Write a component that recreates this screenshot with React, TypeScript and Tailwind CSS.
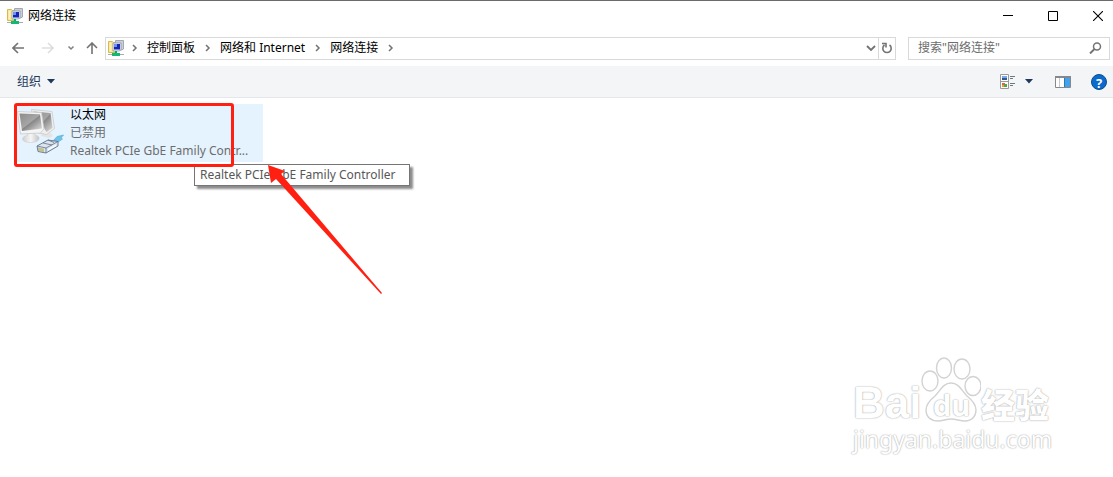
import { useState } from 'react';

const NetworkIcon = () => (
  <svg width="16" height="16" viewBox="0 0 16 16" className="shrink-0" aria-hidden="true">
    <path d="M.5 1.500h4l1 1h3v10h-8z" fill="#f7e08a" stroke="#d9b94e" />
    <path d="M1.500 2.500h2v9h-2z" fill="#fdf3bd" />
    <path d="M7.500.5h8v8.500l-2 1h-6z" fill="#c9cdd4" stroke="#a3a8b3" />
    <path d="M5 3h8v7l-2 1H5z" fill="#e9edf5" stroke="#8f97a8" strokeWidth=".8" />
    <path d="M6 4h6v5.500H6z" fill="#1626b4" />
    <path d="M6 4h3v3H6z" fill="#6d93f2" />
    <path d="M7 11h2v2h2v1H5v-1h2z" fill="#0da866" />
    <path d="M0 14h16v1H0z" fill="#a3afac" />
    <path d="M4 13h8v3H4z" fill="#12b873" />
  </svg>
);

const AdapterIcon = () => (
  <svg width="48" height="52" viewBox="0 0 48 52" className="shrink-0" aria-hidden="true">
    <defs>
      <linearGradient id="screen" x1="0" y1="0" x2="1" y2="1">
        <stop offset="0" stopColor="#8b8b8b" />
        <stop offset=".48" stopColor="#a6a6a6" />
        <stop offset=".52" stopColor="#878787" />
        <stop offset="1" stopColor="#e2e2e2" />
      </linearGradient>
      <linearGradient id="stand" x1="0" y1="0" x2="1" y2="0">
        <stop offset="0" stopColor="#cfcfcf" />
        <stop offset=".5" stopColor="#f6f6f6" />
        <stop offset="1" stopColor="#c4c4c4" />
      </linearGradient>
    </defs>
    <path d="M26 28h8l3 4-4 2-8-2z" fill="#e3e3e3" />
    <path d="M15.500 5.500l20.500 2 2.500 17-8 6-10-2z" fill="#f0f0f0" stroke="#c9c9c9" strokeWidth=".8" />
    <path d="M17.500 7.500l17 1.500 2 15-6 4z" fill="url(#screen)" />
    <path d="M11 28l7-1 1 4c3 .5 4.500 2 4 4-.5 2-4 3.500-8.500 3.500S6.500 37 6.500 35c0-2 2-3.200 5-3.500z" fill="url(#stand)" stroke="#cdcdcd" strokeWidth=".6" />
    <path d="M1.500 7.500l24 1 2.500 16.500-3.500 4L4.500 30z" fill="#f4f4f4" stroke="#c9c9c9" strokeWidth=".8" />
    <path d="M3.500 9.500l20.500.8 2 14.200-20 2.500z" fill="url(#screen)" />
    <path d="M37 37l4-4.500 6.500-1.500-2.500 3 1.500 1-6.500 4.500z" fill="#6fc3e6" stroke="#4aa9d0" strokeWidth=".6" />
    <path d="M21 42l11-6 10 1.500v4.500l-12 7-8-1.500z" fill="#dce4ec" stroke="#61728d" strokeWidth=".9" />
    <path d="M21 42l9 2 12-6.500M30 44v5M27 39l9 2M32 36l6 2.500" fill="none" stroke="#61728d" strokeWidth=".8" />
    <path d="M23 43.500v3.500M25 44v3.500M27 44.500v3.500" stroke="#a5a03e" />
    <path d="M32 45l8-4.500v1.500l-8 4.500z" fill="#fff" />
  </svg>
);

const Chevron = () => (
  <svg width="6" height="8" viewBox="0 0 6 8" className="shrink-0" aria-hidden="true">
    <path d="M1 1l3 3-3 3" fill="none" stroke="#737373" strokeWidth="1.500" />
  </svg>
);

const Triangle = () => (
  <svg width="8" height="5" viewBox="0 0 8 5" aria-hidden="true">
    <path d="M0 0h8L4 4.500z" fill="#1e395b" />
  </svg>
);

const Watermark = () => (
  <div
    className="absolute right-15 bottom-6 w-50 text-white select-none [text-shadow:0_0_1px_#aaa,0_0_2px_#bbb]"
    aria-hidden="true"
  >
    <div className="flex h-17 items-end">
      <span className="w-17 shrink-0 text-[44px] leading-[44px] font-bold font-['Liberation_Sans']">Bai</span>
      <div className="relative h-17 w-15 shrink-0">
        <svg width="60" height="68" viewBox="0 0 60 68" fill="#fff" stroke="#d2d2d2" strokeWidth="1.400">
          <ellipse cx="9" cy="24" rx="8" ry="10" />
          <ellipse cx="23" cy="11" rx="7.500" ry="10" />
          <ellipse cx="41" cy="12" rx="8" ry="10" />
          <ellipse cx="52" cy="29" rx="8" ry="9.500" />
          <path d="M30 26c-8 0-11 8-16 13-5 4-9 8-9 14 0 7 5 11 12 11 5 0 8-2 13-2s9 2 14 2c7 0 11-5 11-11s-4-10-9-14c-5-5-8-13-16-13z" />
        </svg>
        <span className="absolute bottom-1 left-3 text-[29px] leading-8 font-bold font-['Open_Sans']">du</span>
      </div>
      <span className="pb-1 text-[34px] leading-[34px] font-black whitespace-nowrap font-['Noto_Sans_CJK_SC']">经验</span>
    </div>
    <div className="text-[23px] leading-7 font-['Noto_Sans']">jingyan.baidu.com</div>
  </div>
);

const crumbs = ['控制面板', '网络和 Internet', '网络连接'];

export default function App() {
  const [query, setQuery] = useState('');

  return (
    <div className="relative flex h-screen flex-col overflow-hidden border-t border-[#6b6b6b] bg-white font-['Noto_Sans','Noto_Sans_CJK_SC',sans-serif] text-[12px] leading-[18px] text-black">
      {/* Title bar */}
      <header className="flex h-[30px] shrink-0 items-center gap-[15px] pl-[7px]">
        <div className="flex flex-1 items-center gap-[5px]">
          <NetworkIcon />
          <h1>网络连接</h1>
        </div>
        <button aria-label="最小化" className="grid h-full w-[30px] place-items-center">
          <svg width="10" height="10"><path d="M0 4.500h10" stroke="#000" /></svg>
        </button>
        <button aria-label="最大化" className="grid h-full w-[30px] place-items-center">
          <svg width="10" height="10"><path d="M.5.5h9v9h-9z" fill="none" stroke="#000" /></svg>
        </button>
        <button aria-label="关闭" className="grid h-full w-[30px] place-items-center">
          <svg width="10" height="10"><path d="M0 0l10 10M10 0L0 10" stroke="#000" strokeWidth="1.100" /></svg>
        </button>
      </header>

      {/* Address row */}
      <nav className="flex h-[35px] shrink-0 items-center pr-[3px] pb-px pl-3">
        <button aria-label="后退">
          <svg width="13" height="12" fill="none" stroke="#737373" strokeWidth="1.600"><path d="M12 6H1M6 1L1 6l5 5" /></svg>
        </button>
        <button aria-label="前进" className="ml-4">
          <svg width="13" height="12" fill="none" stroke="#dedede" strokeWidth="1.600"><path d="M1 6h11M7 1l5 5-5 5" /></svg>
        </button>
        <button aria-label="最近浏览的位置" className="ml-[13px]">
          <svg width="8" height="6" fill="none" stroke="#808080" strokeWidth="1.500"><path d="M1.500 1.500L4 4l2.500-2.500" /></svg>
        </button>
        <button aria-label="上移" className="ml-[11px]">
          <svg width="12" height="12" fill="none" stroke="#737373" strokeWidth="1.600"><path d="M6 12V1M1 6l5-5 5 5" /></svg>
        </button>
        <div className="ml-[7px] flex h-[23px] min-w-0 flex-1 items-center border border-[#d9d9d9] pl-[2px]">
          <NetworkIcon />
          <span className="ml-2 flex items-center"><Chevron /></span>
          {crumbs.map((crumb) => (
            <span key={crumb} className="flex items-center gap-[10px] pl-[9px] whitespace-nowrap">
              <a href="#">{crumb}</a>
              <Chevron />
            </span>
          ))}
          <button aria-label="以前的位置" className="ml-auto px-[2px]">
            <svg width="10" height="8" fill="none" stroke="#737373" strokeWidth="1.800"><path d="M1 2l4 4 4-4" /></svg>
          </button>
          <button aria-label="刷新" className="grid h-full w-[17px] place-items-center border-l border-[#d9d9d9]">
            <svg width="12" height="12" fill="none" stroke="#737373" strokeWidth="1.600"><path d="M3.500 3a4.200 4.200 0 1 0 5 0M1 1.500h4v4" /></svg>
          </button>
        </div>
        <label className="ml-3 flex h-[23px] w-[202px] items-center border border-[#d9d9d9] pr-[7px] pl-[9px]">
          <input
            aria-label="搜索网络连接"
            value={query}
            onChange={(e) => setQuery(e.target.value)}
            placeholder={'搜索"网络连接"'}
            className="min-w-0 flex-1 outline-none placeholder:text-[#6d6d6d]"
          />
          <svg width="13" height="12" fill="none" stroke="#737373" strokeWidth="1.500"><circle cx="8" cy="4.500" r="3.500" /><path d="M5.500 7L1 11.500" strokeWidth="1.900" /></svg>
        </label>
      </nav>

      {/* Command bar */}
      <div className="flex h-8 shrink-0 items-center border-b border-[#e5e7ea] bg-[#f4f5f7] pr-[6px] pl-[17px] text-[#1e395b]">
        <button className="flex items-center gap-[6px]">
          组织 <Triangle />
        </button>
        <button aria-label="更改视图" className="ml-auto">
          <svg width="16" height="15" fill="none">
            <path d="M.5.5h8v14h-8zM.5 7.500h8" fill="#fff" stroke="#9a9a9a" />
            <path d="M2 2h5v2H2z" fill="#75aaf0" /><path d="M2 4h5v2H2z" fill="#315a91" />
            <path d="M2 9h3v2H2z" fill="#d8674c" /><path d="M4 10h3v3H4z" fill="#58a447" /><path d="M2 11h2v2H2z" fill="#e1a63b" />
            <path d="M10 2.500h5M10 4.500h3M10 9.500h5M10 11.500h3" stroke="#6d7885" />
          </svg>
        </button>
        <button aria-label="更多选项" className="ml-[9px]"><Triangle /></button>
        <button aria-label="显示预览窗格" className="ml-[22px]">
          <svg width="16" height="12">
            <path d="M.5.5h15v11H.5z" fill="#fff" stroke="#85888c" />
            <path d="M0 0h16v2H0z" fill="#85888c" />
            <path d="M4.500 2v9" stroke="#c8c8c8" />
            <path d="M9 2h6v9H9z" fill="#45a1e8" /><path d="M9.500 2v9" stroke="#237cbc" />
          </svg>
        </button>
        <button aria-label="帮助" className="ml-5 grid size-4 place-items-center rounded-full border border-[#07508e] bg-[#0a6bcc] text-[13px] leading-4 font-bold text-white">
          ?
        </button>
      </div>

      <main className="flex-1 pt-[6px] pl-[14px]">
        <div className="relative flex h-[58px] w-[249px] bg-[#e5f3ff] pl-[2px]">
          <AdapterIcon />
          <div className="ml-[6px] pt-[2px] text-[#6d6d6d]">
            <p className="text-black">以太网</p>
            <p>已禁用</p>
            <p className="whitespace-nowrap">Realtek PCIe GbE Family Contr...</p>
          </div>
          <div role="tooltip" className="absolute top-[60px] left-[180px] h-[22px] w-[216px] border border-[#767676] bg-white px-[5px] leading-5 whitespace-nowrap text-[#575757] shadow-[3px_3px_2px_rgba(0,0,0,0.45)]">
            Realtek PCIe GbE Family Controller
          </div>
          {/* Marker frame and arrow */}
          <div className="absolute -top-px left-0 h-16 w-[220px] rounded-[3px] border-3 border-[#ff2012]" />
          <svg width="116" height="132" viewBox="0 0 116 132" className="absolute top-[61px] left-[253px]" aria-hidden="true">
            <path d="M1 0l17 6-4 3 101 119-1 1L9 14l-5 4z" fill="#ff2012" />
          </svg>
        </div>
      </main>
      <Watermark />
    </div>
  );
}
